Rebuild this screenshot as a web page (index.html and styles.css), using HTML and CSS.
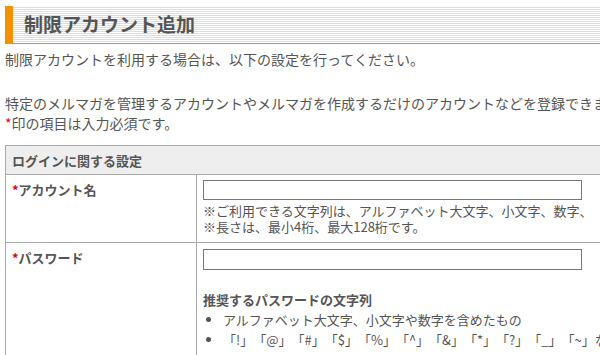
FILE: index.html
```html
<!DOCTYPE html>
<html lang="ja">
<head>
    <meta charset="UTF-8">
    <meta name="viewport" content="width=device-width, initial-scale=1.0">
    <title>制限アカウント追加</title>
    <link rel="stylesheet" href="styles.css">
</head>
<body>
    <div class="page">
        <h1 class="page-title">制限アカウント追加</h1>

        <p class="lead">制限アカウントを利用する場合は、以下の設定を行ってください。</p>
        <p class="lead">特定のメルマガを管理するアカウントやメルマガを作成するだけのアカウントなどを登録できます。<br>
            <span class="req">*</span>印の項目は入力必須です。</p>

        <table class="form-table">
            <tr>
                <th class="section" colspan="2">ログインに関する設定</th>
            </tr>
            <tr>
                <th class="label"><span class="req">*</span>アカウント名</th>
                <td>
                    <input type="text" class="text-input">
                    <p class="note">※ご利用できる文字列は、アルファベット大文字、小文字、数字、「_」「-」「.」です。<br>
                        ※長さは、最小4桁、最大128桁です。</p>
                </td>
            </tr>
            <tr>
                <th class="label"><span class="req">*</span>パスワード</th>
                <td>
                    <input type="password" class="text-input">
                    <p class="hint-title">推奨するパスワードの文字列</p>
                    <ul class="hint-list">
                        <li>アルファベット大文字、小文字や数字を含めたもの</li>
                        <li>「!」「@」「#」「$」「%」「^」「&amp;」「*」「?」「_」「~」などの記号を含めたもの</li>
                    </ul>
                </td>
            </tr>
        </table>
    </div>
</body>
</html>
```

FILE: styles.css
```css
html {
    overflow: hidden;
}
body {
    margin: 0;
    font-family: "Noto Sans CJK JP", "Noto Sans", sans-serif;
    font-size: 14px;
    color: #555;
    background-color: #fff;
    text-spacing-trim: space-all;
}
.page {
    width: 900px;
    padding: 6px 0 0 5px;
}
.page-title {
    margin: 0;
    height: 37px;
    line-height: 36px;
    padding-left: 11px;
    font-size: 19px;
    font-weight: bold;
    color: #555;
    border-left: 8px solid #f39200;
    border-bottom: 1px solid #999;
    background: repeating-linear-gradient(to bottom, #fff 0, #fff 1px, #ddd 1px, #ddd 2px);
}
.lead {
    margin: 5px 0 0;
    line-height: 20px;
}
.lead + .lead {
    margin-top: 24px;
}
.req {
    color: #e60012;
}
.form-table {
    margin-top: 12px;
    width: 100%;
    border-collapse: collapse;
    font-size: 13px;
}
.form-table th,
.form-table td {
    border: 1px solid #aaa;
    text-align: left;
    vertical-align: top;
}
.form-table .section {
    background-color: #eee;
    height: 28px;
    padding: 0 6px;
    vertical-align: middle;
    font-weight: bold;
}
.form-table .label {
    width: 178px;
    padding: 5px 6px 6px;
    line-height: 20px;
    font-weight: bold;
}
.form-table td {
    padding: 5px 6px 7px;
}
.text-input {
    display: block;
    box-sizing: border-box;
    width: 379px;
    height: 20px;
    margin: 0;
    border: 1px solid #777;
    padding: 0 3px;
}
.form-table tr:last-child .text-input {
    margin-top: 1px;
    height: 21px;
}
.note {
    margin: 3px 0 0;
    line-height: 16px;
}
.hint-title {
    margin: 20px 0 0;
    line-height: 20px;
    font-weight: bold;
}
.hint-list {
    margin: 0;
    padding-left: 20px;
    line-height: 20px;
}
```
